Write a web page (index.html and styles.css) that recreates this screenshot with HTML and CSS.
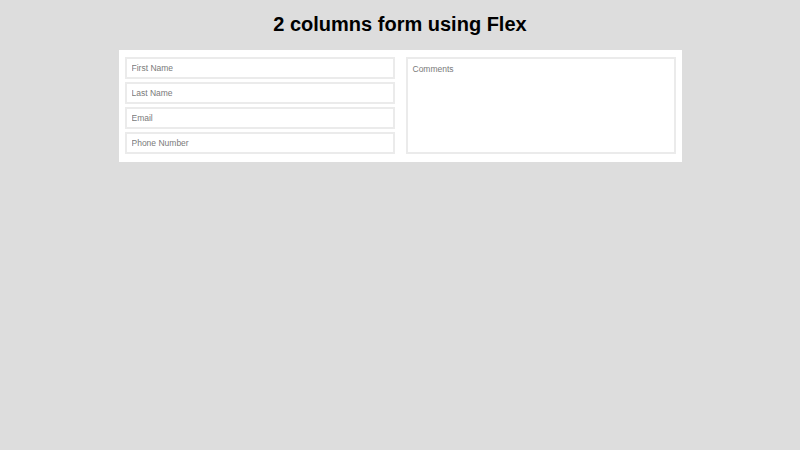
FILE: index.html
```html
<!DOCTYPE html>
<html>
<head>
<meta charset="utf-8">
<link rel="stylesheet" href="styles.css">
</head>
<body>
<h1 class="title">2 columns form using Flex</h1>
<form class="form">
  <div class="col">
    <input class="field" type="text" placeholder="First Name">
    <input class="field" type="text" placeholder="Last Name">
    <input class="field" type="text" placeholder="Email">
    <input class="field" type="text" placeholder="Phone Number">
  </div>
  <div class="col">
    <textarea class="comments" placeholder="Comments"></textarea>
  </div>
</form>
</body>
</html>
```
FILE: styles.css
```css
html, body {
  margin: 0;
  padding: 0;
}
body {
  background: #dddddd;
  font-family: "Liberation Sans", Arial, sans-serif;
  color: #000;
}
.title {
  margin: 0;
  padding-top: 12px;
  height: 39px;
  box-sizing: border-box;
  text-align: center;
  font-size: 20px;
  font-weight: bold;
  line-height: 25px;
}
.form {
  width: 563px;
  margin: 0 auto;
  background: #fff;
  padding: 7px 6px 8px 6px;
  box-sizing: border-box;
  display: flex;
  gap: 11px;
  margin-top: 11px;
}
.col {
  flex: 1;
  display: flex;
  flex-direction: column;
  gap: 3px;
}
.field, .comments {
  display: block;
  width: 100%;
  box-sizing: border-box;
  border: 2px solid #ebebeb;
  background: #fff;
  font-family: "Liberation Sans", Arial, sans-serif;
  font-size: 8.5px;
  color: #333;
  padding: 0 5px;
  margin: 0;
  outline: none;
}
.field {
  height: 22px;
}
.comments {
  height: 97px;
  resize: none;
  padding-top: 5px;
}
.field::placeholder, .comments::placeholder {
  color: #7a7a7a;
}
```
